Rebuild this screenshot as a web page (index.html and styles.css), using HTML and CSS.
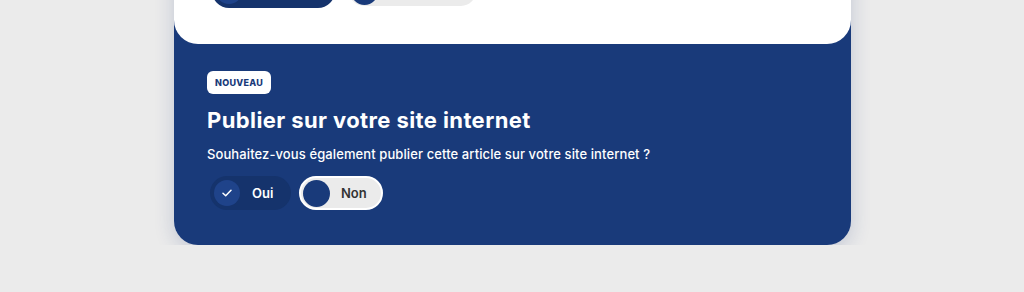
FILE: index.html
```html
<!DOCTYPE html>
<html lang="fr">
<head>
    <meta charset="UTF-8">
    <meta name="viewport" content="width=device-width, initial-scale=1.0">
    <title>Publier sur votre site internet</title>
    <link rel="stylesheet" href="styles.css">
</head>
<body>
    <div class="card">
        <div class="card-top">
            <div class="choices">
                <div class="choice choice-on top-on">
                    <span class="dot"></span>
                </div>
                <div class="choice choice-off top-off">
                    <span class="dot"></span>
                </div>
            </div>
        </div>

        <div class="card-body">
            <span class="badge">Nouveau</span>
            <h2>Publier sur votre site internet</h2>
            <p>Souhaitez-vous également publier cette article sur votre site internet ?</p>

            <div class="choices">
                <div class="choice choice-on">
                    <span class="dot">
                        <svg width="10" height="8" viewBox="0 0 10 8"><path d="M1 4.2 3.7 6.8 9 1.2" fill="none" stroke="#fff" stroke-width="1.5" stroke-linecap="round" stroke-linejoin="round"/></svg>
                    </span>
                    <span class="label">Oui</span>
                </div>
                <div class="choice choice-off">
                    <span class="dot"></span>
                    <span class="label">Non</span>
                </div>
            </div>
        </div>
    </div>
</body>
</html>
```

FILE: styles.css
```css
body {
    margin: 0;
    background-color: #ebebeb;
    font-family: Inter, "Noto Sans", sans-serif;
}
.card {
    width: 677px;
    margin-left: 174px;
    background-color: #193a7a;
    border-radius: 0 0 24px 24px;
    box-shadow: 0 5px 20px rgba(30, 55, 120, 0.2);
}
.card-top {
    background-color: #fff;
    border-radius: 0 0 24px 24px;
    padding: 0 38px 36px;
}
.card-top .choices {
    margin-top: -26px;
    gap: 12px;
}
.card-body {
    display: flex;
    flex-direction: column;
    align-items: flex-start;
    padding: 27px 33px 35px;
    color: #fff;
}
.badge {
    background-color: #fff;
    color: #193a7a;
    font-size: 9px;
    font-weight: 800;
    text-transform: uppercase;
    letter-spacing: 0.3px;
    line-height: 23px;
    padding: 0 8px;
    border-radius: 6px;
}
h2 {
    margin: 12px 0 0;
    font-size: 22px;
    line-height: 28px;
    font-weight: 700;
    letter-spacing: 0.4px;
}
p {
    margin: 11px 0 0;
    font-size: 13px;
    line-height: 18px;
    font-weight: 500;
    letter-spacing: 0.1px;
}
.card-body .choices {
    margin-top: 13px;
    margin-left: 3px;
}
.choices {
    display: flex;
    gap: 8px;
}
.choice {
    display: flex;
    align-items: center;
    height: 34px;
    box-sizing: border-box;
    border-radius: 17px;
    padding: 0 4px;
}
.choice-on {
    background-color: #15336c;
    width: 81px;
}
.choice-off {
    background-color: #ebebeb;
    border: 2px solid #fff;
    width: 84px;
    padding: 0 2px;
}
.choice.top-on {
    width: 123px;
}
.choice.top-off {
    width: 131px;
}
.dot {
    width: 26px;
    height: 26px;
    border-radius: 50%;
    display: flex;
    align-items: center;
    justify-content: center;
    flex-shrink: 0;
}
.choice-on .dot {
    background-color: #1f438a;
}
.choice-off .dot {
    background-color: #193a7a;
    width: 27px;
    height: 27px;
}
.label {
    font-size: 13px;
    font-weight: 600;
    margin-left: 12px;
}
.choice-on .label {
    color: #fff;
}
.choice-off .label {
    color: #333;
    margin-left: 11px;
}
```
